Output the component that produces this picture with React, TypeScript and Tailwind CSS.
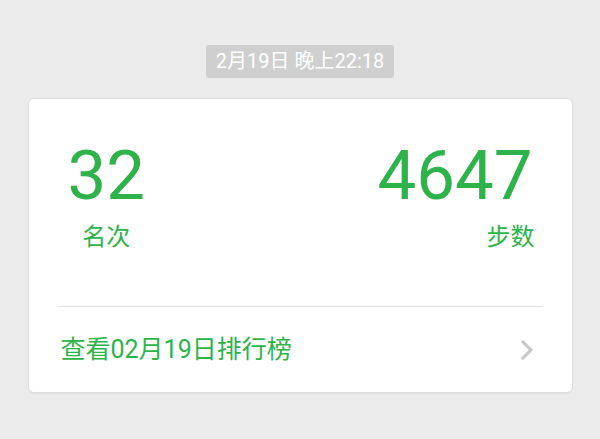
import React from "react";

export default function App() {
  const font = "font-['Roboto','Noto_Sans_CJK_SC',sans-serif]";
  return (
    <div className={`w-[600px] h-[439px] bg-[#ebebeb] flex flex-col items-center ${font}`}>
      <div className="mt-[45px] h-[33px] px-[10px] rounded-[3px] bg-[#cfcfcf] text-white text-[20px] leading-[33px] whitespace-nowrap">
        2月19日 晚上22:18
      </div>
      <div className="mt-[20px] w-[545px] h-[295px] bg-white rounded-[6px] border border-[#dedede] shadow-[0_1px_1px_rgba(0,0,0,0.05)] flex flex-col">
        <div className="flex justify-between px-[39px] pt-[42px] h-[207px]">
          <div className="flex flex-col items-center">
            <div className="text-[69px] leading-none text-[#2db34a]">32</div>
            <div className="mt-[15px] text-[24px] leading-[24px] text-[#2db34a]">名次</div>
          </div>
          <div className="flex flex-col items-end">
            <div className="text-[69px] leading-none text-[#2db34a]">4647</div>
            <div className="mt-[15px] text-[24px] leading-[24px] text-[#2db34a] mr-[-2px]">步数</div>
          </div>
        </div>
        <div className="mx-[29px] h-px bg-[#e3e3e3]" />
        <div className="flex-1 flex items-center justify-between pl-[32px] pr-[38px]">
          <div className="text-[25px] leading-none text-[#2db34a]">查看02月19日排行榜</div>
          <svg width="14" height="20" viewBox="0 0 14 20" fill="none">
            <polyline points="3,2 11,10 3,18" stroke="#c7c7c7" strokeWidth="3" strokeLinecap="square" />
          </svg>
        </div>
      </div>
    </div>
  );
}
